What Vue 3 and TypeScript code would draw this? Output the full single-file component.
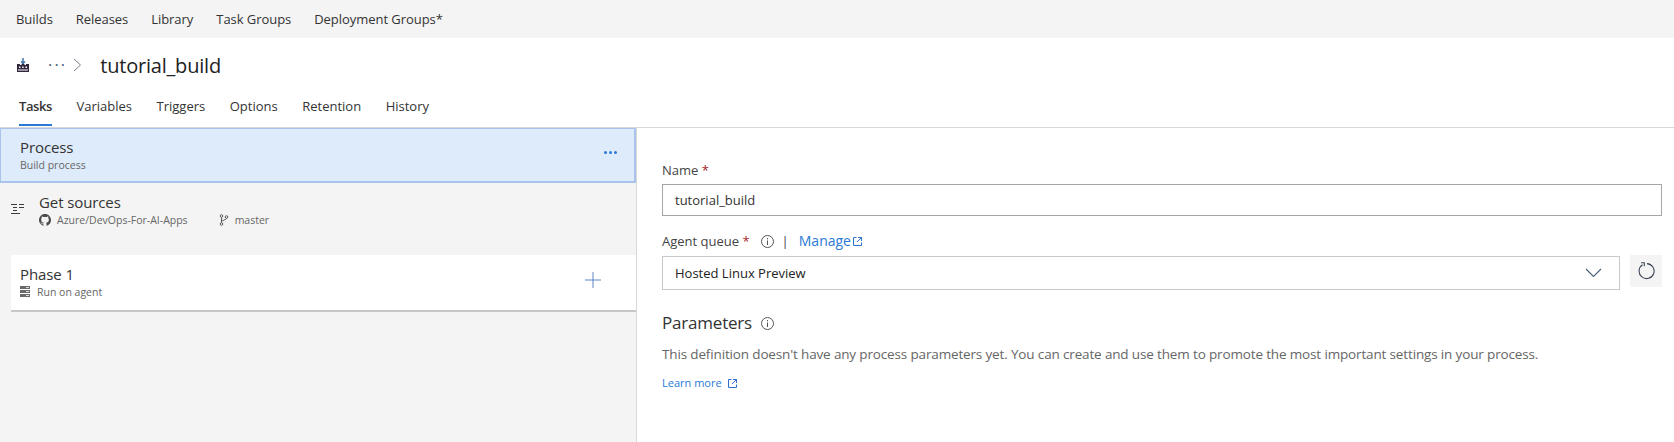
<template>
  <div class="page">
    <nav class="hub-bar">
      <a v-for="item in hubs" :key="item">{{ item }}</a>
    </nav>

    <header class="title-row">
      <svg class="build-icon" width="14" height="14" viewBox="0 0 14 14">
        <path d="M7 0v5M5 3.4L7 5.6 9 3.4" fill="none" stroke="#3a6ea5" stroke-width="1.4" />
        <path d="M1 6h3v1h1.500V6h3v1H10V6h3v8H1z" fill="#33263f" />
        <path d="M3 8.500h1.500V10H3zM6.200 8.500h1.500V10H6.200zM9.500 8.500H11V10H9.500z" fill="#fff" />
        <path d="M2 11.500h10v1H2z" fill="#fff" />
      </svg>
      <span class="crumb-dots">···</span>
      <svg class="crumb-sep" width="9" height="14" viewBox="0 0 9 14">
        <path d="M1 1l6.500 6L1 13" fill="none" stroke="#7d7d8c" stroke-width="1" />
      </svg>
      <h1>tutorial_build</h1>
    </header>

    <div class="tabs">
      <a
        v-for="tab in tabs"
        :key="tab"
        class="tab"
        :class="{ active: tab === 'Tasks' }"
      >{{ tab }}</a>
    </div>

    <main class="content">
      <section class="left">
        <div class="process">
          <div>
            <div class="node-title">Process</div>
            <div class="node-sub process-sub">Build process</div>
          </div>
          <div class="more"><i /><i /><i /></div>
        </div>

        <div class="sources">
          <svg class="lines-icon" width="16" height="14" viewBox="0 0 16 14">
            <path
              d="M1 2.500h6M9 2.500h5M3 5.500h4M9 5.500h5M3 8.500h4M1 11.500h9"
              fill="none"
              stroke="#3c3c3c"
              stroke-width="1"
            />
          </svg>
          <div>
            <div class="node-title">Get sources</div>
            <div class="node-sub sources-sub">
              <svg class="gh" width="12" height="12" viewBox="0 0 16 16">
                <path
                  fill="#4a4a4a"
                  d="M8 0C3.580 0 0 3.580 0 8c0 3.540 2.290 6.530 5.470 7.590.4.070.55-.17.55-.38 0-.19-.01-.82-.01-1.490-2.010.370-2.530-.49-2.690-.940-.09-.23-.48-.94-.82-1.130-.28-.15-.68-.52-.01-.53.63-.01 1.080.58 1.230.82.720 1.210 1.870.870 2.330.660.070-.52.280-.87.510-1.070-1.780-.2-3.640-.89-3.640-3.950 0-.87.310-1.590.820-2.150-.08-.2-.36-1.020.08-2.120 0 0 .67-.21 2.200.82a7.500 7.500 0 0 1 4 0c1.530-1.040 2.200-.82 2.200-.82.440 1.100.160 1.920.080 2.120.51.560.82 1.270.82 2.150 0 3.070-1.870 3.750-3.650 3.950.290.250.540.730.540 1.480 0 1.070-.01 1.930-.01 2.200 0 .21.150.46.550.38A8.010 8.010 0 0 0 16 8c0-4.420-3.580-8-8-8z"
                />
              </svg>
              <span class="repo">Azure/DevOps-For-AI-Apps</span>
              <svg class="branch" width="10" height="12" viewBox="0 0 10 12">
                <g fill="none" stroke="#5a5a5a" stroke-width="1">
                  <circle cx="2.500" cy="2" r="1.300" />
                  <circle cx="2.500" cy="10" r="1.300" />
                  <circle cx="7.500" cy="3" r="1.300" />
                  <path d="M2.500 3.300v5.400M7.500 4.300c0 2-5 1.500-5 3.500" />
                </g>
              </svg>
              <span>master</span>
            </div>
          </div>
        </div>

        <div class="phase">
          <div>
            <div class="node-title">Phase 1</div>
            <div class="node-sub agent-sub">
              <svg width="10" height="11" viewBox="0 0 10 11">
                <path
                  fill="#6a6a6a"
                  d="M0 0h10v3H0zM0 4h10v3H0zM0 8h10v3H0z"
                />
                <path fill="#ddd" d="M6 1h3v1H6zM6 5h3v1H6zM6 9h3v1H6z" />
              </svg>
              <span>Run on agent</span>
            </div>
          </div>
          <svg class="plus" width="16" height="16" viewBox="0 0 16 16">
            <path d="M8 0v16M0 8h16" stroke="#5f86c4" stroke-width="1" fill="none" />
          </svg>
        </div>
      </section>

      <section class="right">
        <label class="field-label name-label">Name <b>*</b></label>
        <div class="input name-input">tutorial_build</div>

        <div class="field-label queue-label">
          <span>Agent queue <b>*</b></span>
          <svg class="info" width="13" height="13" viewBox="0 0 13 13">
            <circle cx="6.500" cy="6.500" r="6" fill="none" stroke="#555" />
            <path d="M6.500 5.500v4.500M6.500 3v1.300" stroke="#555" fill="none" />
          </svg>
          <span class="pipe">|</span>
          <a class="link manage">Manage</a>
          <svg class="ext" width="9" height="9" viewBox="0 0 9 9">
            <path d="M3.500.5H.5v8h8v-3M5 .5h3.500V4M8.500.5L4 5" fill="none" stroke="#2f6fd0" />
          </svg>
        </div>

        <div class="queue-row">
          <div class="input select">
            <span>Hosted Linux Preview</span>
            <svg width="17" height="10" viewBox="0 0 17 10">
              <path d="M1 1l7.500 7.500L16 1" fill="none" stroke="#44607a" stroke-width="1.100" />
            </svg>
          </div>
          <button class="refresh" type="button">
            <svg width="18" height="18" viewBox="0 0 18 18">
              <path
                d="M5.500 2.800A7.500 7.500 0 1 0 10 1.600"
                fill="none"
                stroke="#3c4454"
                stroke-width="1.100"
              />
              <path d="M4 .8h3.300v3.400" fill="none" stroke="#3c4454" stroke-width="1.100" />
            </svg>
          </button>
        </div>

        <h2>
          Parameters
          <svg class="info" width="13" height="13" viewBox="0 0 13 13">
            <circle cx="6.500" cy="6.500" r="6" fill="none" stroke="#555" />
            <path d="M6.500 5.500v4.500M6.500 3v1.300" stroke="#555" fill="none" />
          </svg>
        </h2>
        <p class="desc">
          This definition doesn't have any process parameters yet. You can create and use them to
          promote the most important settings in your process.
        </p>
        <div class="learn">
          <a class="link">Learn more</a>
          <svg class="ext" width="9" height="9" viewBox="0 0 9 9">
            <path d="M3.500.5H.5v8h8v-3M5 .5h3.500V4M8.500.5L4 5" fill="none" stroke="#2f6fd0" />
          </svg>
        </div>
      </section>
    </main>
  </div>
</template>

<script setup lang="ts">
const hubs: string[] = ['Builds', 'Releases', 'Library', 'Task Groups', 'Deployment Groups*']
const tabs: string[] = ['Tasks', 'Variables', 'Triggers', 'Options', 'Retention', 'History']
</script>

<style>
html,
body {
  margin: 0;
  background: #fff;
}
</style>

<style scoped>
.page {
  width: 1674px;
  height: 442px;
  display: flex;
  flex-direction: column;
  overflow: hidden;
  font-family: "Open Sans", "Noto Sans", sans-serif;
  color: #333;
}

.hub-bar {
  height: 38px;
  flex-shrink: 0;
  display: flex;
  align-items: center;
  gap: 23px;
  padding-left: 16px;
  background: #f4f4f4;
  font-size: 13px;
  letter-spacing: -0.05px;
}

.title-row {
  height: 54px;
  flex-shrink: 0;
  display: flex;
  align-items: center;
  padding-left: 16px;
}

.crumb-dots {
  margin-left: 18px;
  font-size: 16px;
  color: #3f5a7a;
  letter-spacing: 2.2px;
}

.crumb-sep {
  margin-left: 6px;
}

h1 {
  margin: 0 0 0 18px;
  font-size: 20px;
  font-weight: 400;
  color: #222;
  letter-spacing: -0.2px;
}

.tabs {
  height: 35px;
  flex-shrink: 0;
  display: flex;
  gap: 24.5px;
  padding-left: 19px;
  border-bottom: 1px solid #d8d8d8;
  font-size: 13px;
}

.tab {
  line-height: 29px;
  height: 34px;
  box-sizing: border-box;
}

.tab.active {
  font-weight: 600;
  letter-spacing: -0.4px;
  border-bottom: 2px solid #2b79d6;
}

.content {
  flex: 1;
  display: flex;
  min-height: 0;
}

.left {
  width: 636px;
  flex-shrink: 0;
  background: #f4f4f4;
  border-right: 1px solid #d8d8d8;
}

.process {
  height: 55px;
  box-sizing: border-box;
  display: flex;
  align-items: center;
  justify-content: space-between;
  padding: 0 17px 2px 19px;
  background: #deebfa;
  border: 1px solid #a9c3ec;
  border-width: 1px 2px 2px 1px;
}

.node-title {
  font-size: 15px;
  line-height: 20px;
  color: #333;
  letter-spacing: -0.1px;
}

.node-sub {
  font-size: 10.5px;
  line-height: 14px;
  color: #666;
}

.process-sub {
  margin-top: 1px;
}

.more {
  display: flex;
  gap: 2px;
  margin-bottom: 4px;
}

.more i {
  width: 3px;
  height: 3px;
  border-radius: 50%;
  background: #2b79d6;
}

.sources {
  height: 72px;
  box-sizing: border-box;
  display: flex;
  gap: 13px;
  padding: 9px 0 0 10px;
}

.lines-icon {
  margin-top: 10px;
}

.sources-sub {
  display: flex;
  align-items: center;
  margin-top: 1px;
}

.repo {
  margin-left: 6px;
}

.branch {
  margin: 0 6px 0 31px;
}

.phase {
  height: 57px;
  box-sizing: border-box;
  margin-left: 11px;
  display: flex;
  align-items: center;
  justify-content: space-between;
  padding: 0 35px 3px 9px;
  background: #fff;
  border-bottom: 2px solid #c8c8c8;
}

.plus {
  margin-bottom: 2px;
}

.agent-sub {
  display: flex;
  align-items: center;
  gap: 7px;
  margin-top: 1px;
}

.right {
  flex: 1;
  padding: 33px 12px 0 25px;
  min-width: 0;
  background: #fff;
}

.field-label {
  font-size: 13px;
  line-height: 18px;
  color: #444;
  display: block;
}

.field-label b {
  color: #a4262c;
  font-weight: 400;
}

.input {
  box-sizing: border-box;
  font-size: 13px;
  color: #333;
  padding-left: 12px;
  display: flex;
  align-items: center;
}

.name-input {
  height: 32px;
  margin-top: 5px;
  border: 1px solid #a6a6a6;
}

.queue-label {
  margin-top: 16px;
  display: flex;
  align-items: center;
}

.queue-label .info {
  margin-left: 11px;
}

.pipe {
  margin: 0 10px 0 8px;
}

.link {
  color: #2b79d6;
}

.manage {
  font-size: 14px;
}

.ext {
  margin-left: 2px;
}

.queue-row {
  margin-top: 5px;
  display: flex;
  gap: 10px;
  align-items: flex-start;
}

.select {
  flex: 1;
  height: 34px;
  margin-top: 1px;
  border: 1px solid #c8c8c8;
  justify-content: space-between;
  padding-right: 17px;
  color: #222;
}

.refresh {
  width: 32px;
  height: 32px;
  padding: 0;
  border: 0;
  background: #f4f4f4;
  display: flex;
  align-items: center;
  justify-content: center;
}

h2 {
  margin: 22px 0 0;
  font-size: 17px;
  font-weight: 400;
  line-height: 22px;
  color: #333;
  display: flex;
  align-items: center;
  gap: 9px;
  letter-spacing: -0.2px;
}

.desc {
  margin: 11px 0 0;
  font-size: 13.5px;
  line-height: 18px;
  color: #666;
  letter-spacing: -0.15px;
}

.learn {
  margin-top: 12px;
  font-size: 11px;
  line-height: 16px;
  display: flex;
  align-items: center;
  gap: 4px;
}
</style>
